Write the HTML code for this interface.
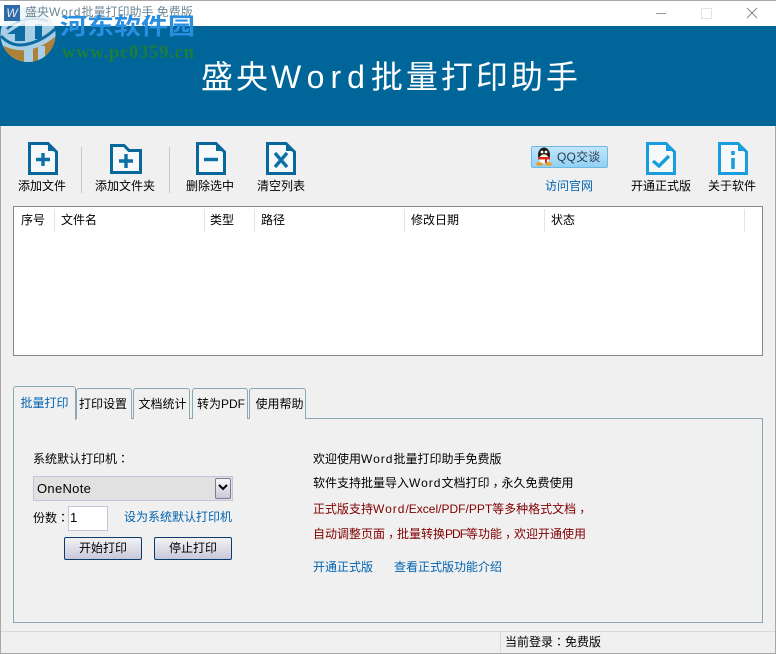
<!DOCTYPE html>
<html><head><meta charset="utf-8">
<style>
html,body{margin:0;padding:0}
body{width:776px;height:654px;position:relative;overflow:hidden;background:#f0f0f0;font-family:"Liberation Sans","Noto Sans CJK SC",sans-serif;font-size:12px;color:#000}
.a{position:absolute}
.t{position:absolute;white-space:nowrap;line-height:16px;font-size:12px}
.blue{color:#0063b1}
.red{color:#800000}
.w{letter-spacing:1px}
.n{letter-spacing:-1px}
.c{display:inline-block;width:12px;text-align:center;font-family:"Noto Sans CJK TC",sans-serif}
.k{display:inline-block;width:12px;text-align:center;font-family:"Noto Sans CJK TC",sans-serif;transform:translateY(3px)}
.sep{position:absolute;width:1px;background:#c8c8c8}
.col{position:absolute;width:1px;top:209px;height:23px;background:#e4e4e4}
.tab{position:absolute;top:388px;height:30px;border:1px solid #8ba6b5;border-bottom:none;border-radius:3px 3px 0 0;background:#f0f0f0;text-align:center;line-height:30px;box-sizing:content-box}
.btn{position:absolute;top:537px;width:76px;height:21px;border:1px solid #0a3d6b;border-radius:2px;background:linear-gradient(#f2f2f6,#c9c8da);text-align:center;line-height:21px}
</style></head><body>
<!-- frame -->
<div class="a" style="left:0;top:0;width:776px;height:26px;background:#fff"></div>
<div class="a" style="left:0;top:0;width:776px;height:1px;background:#a8a8a8"></div>
<div class="a" style="left:0;top:26px;width:776px;height:100px;background:#00669a"></div>
<div class="a" style="left:0;top:126px;width:1px;height:528px;background:#a8a8a8"></div>
<div class="a" style="left:775px;top:126px;width:1px;height:528px;background:#a8a8a8"></div>
<div class="a" style="left:0;top:653px;width:776px;height:1px;background:#a8a8a8"></div>
<!-- watermark logo -->
<svg class="a" style="left:0;top:0" width="60" height="66" viewBox="0 0 60 66">
<defs><clipPath id="cc"><circle cx="28" cy="34.500" r="27.500"/></clipPath></defs>
<g clip-path="url(#cc)">
<rect x="0" y="0" width="60" height="66" fill="#a9cfe4"/>
<path d="M4 46Q30 58 56 36V66H0Z" fill="#ad8238"/>
<rect x="24" y="49" width="9" height="16" fill="#a9cfe4"/>
<rect x="38" y="46" width="7" height="16" fill="#a9cfe4"/>
<path d="M1 36Q12 48 28 44Q44 40 56 28" fill="none" stroke="#0c6ba3" stroke-width="3"/>
<path d="M7 34L25 22V41H15V34Z" fill="#0c6ba3"/>
<rect x="35" y="24" width="7" height="15" fill="#0c6ba3"/>
<path d="M7 29Q24 14 48 21" fill="none" stroke="#0c6ba3" stroke-width="2.500"/>
</g>
<rect x="0" y="1" width="60" height="25" fill="#fff" opacity=".82"/>
<path d="M17 17l1.500 2 2-1-1 2 1.500 1.500-2.500-.5-1 2-.5-2.500-2-.5 2-1z" fill="#6fa6d8"/>
</svg>
<!-- title bar -->
<div class="a" style="left:4px;top:5px;width:16px;height:16px;background:#2f6aa8;color:#e8eef6;font-size:12px;line-height:16px;text-align:center;font-style:italic">W</div>
<div class="t" style="left:25px;top:4px;color:#6f8796">盛央<span class="w">Word</span>批量打印助手 免费版</div>
<div class="a" style="left:656px;top:13px;width:10px;height:1px;background:#999"></div>
<div class="a" style="left:701px;top:8px;width:9px;height:9px;border:1px solid #e4e4e4"></div>
<svg class="a" style="left:746px;top:7px" width="12" height="12"><path d="M1 1L11 11M11 1L1 11" stroke="#888" stroke-width="1" fill="none"/></svg>
<div class="t" style="left:60px;top:12px;font-size:27px;line-height:30px;font-weight:bold;color:#2a8fe0;font-family:'Noto Sans CJK SC',sans-serif;transform:scaleY(.85);transform-origin:0 0">河东软件园</div>
<div class="t" style="left:62px;top:45px;font-size:18.500px;font-weight:bold;color:#1d7d3a;font-family:'Liberation Serif',serif;letter-spacing:.8px">www.pc0359.cn</div>
<!-- banner title -->
<div class="t" style="left:201px;top:54px;font-size:32px;line-height:46px;color:#fff;letter-spacing:3px">盛央<span style="letter-spacing:6px">Word</span>批量打印助手</div>
<!-- toolbar icons -->
<svg class="a" style="left:27px;top:142px" width="32" height="34"><path d="M2.500 1.500H21L29.500 10V31.500H2.500Z" fill="#f6f8fa" stroke="#08689b" stroke-width="3"/><path d="M21 0L30 9H21Z" fill="#08689b"/><path d="M16 11V24M9 17.500H23" stroke="#0c6fa5" stroke-width="3.400"/></svg>
<svg class="a" style="left:109px;top:143px" width="34" height="32"><path d="M2.500 2.500H15L20 7.500H31.500V29.500H2.500Z" fill="#f6f8fa" stroke="#08689b" stroke-width="3"/><path d="M17 11V25M10 18H24" stroke="#0c6fa5" stroke-width="3.400"/></svg>
<svg class="a" style="left:195px;top:142px" width="32" height="34"><path d="M2.500 1.500H21L29.500 10V31.500H2.500Z" fill="#f6f8fa" stroke="#08689b" stroke-width="3"/><path d="M21 0L30 9H21Z" fill="#08689b"/><path d="M9 17.500H23" stroke="#0c6fa5" stroke-width="3.400"/></svg>
<svg class="a" style="left:265px;top:142px" width="32" height="34"><path d="M2.500 1.500H21L29.500 10V31.500H2.500Z" fill="#f6f8fa" stroke="#08689b" stroke-width="3"/><path d="M21 0L30 9H21Z" fill="#08689b"/><path d="M10 11L22 25M22 11L10 25" stroke="#0c6fa5" stroke-width="3.400"/></svg>
<svg class="a" style="left:645px;top:142px" width="32" height="34"><path d="M2.500 1.500H21L29.500 10V31.500H2.500Z" fill="#f6f8fa" stroke="#1a9ddc" stroke-width="3"/><path d="M21 0L30 9H21Z" fill="#1a9ddc"/><path d="M8 19L14 24L24 14" fill="none" stroke="#1a9ddc" stroke-width="3.400"/></svg>
<svg class="a" style="left:717px;top:142px" width="32" height="34"><path d="M2.500 1.500H21L29.500 10V31.500H2.500Z" fill="#f6f8fa" stroke="#1a9ddc" stroke-width="3"/><path d="M21 0L30 9H21Z" fill="#1a9ddc"/><path d="M16 9V13M16 16V27" stroke="#1a9ddc" stroke-width="3.600"/></svg>
<div class="sep" style="left:81px;top:147px;height:46px"></div>
<div class="sep" style="left:169px;top:147px;height:46px"></div>
<div class="t" style="left:18px;top:178px">添加文件</div>
<div class="t" style="left:95px;top:178px">添加文件夹</div>
<div class="t" style="left:186px;top:178px">删除选中</div>
<div class="t" style="left:257px;top:178px">清空列表</div>
<div class="t" style="left:631px;top:178px">开通正式版</div>
<div class="t" style="left:708px;top:178px">关于软件</div>
<div class="t blue" style="left:545px;top:178px">访问官网</div>
<!-- QQ -->
<div class="a" style="left:531px;top:146px;width:75px;height:20px;border:1px solid #6db9e6;border-radius:2px;background:linear-gradient(#c4e6fa,#92d0f2)"></div>
<svg class="a" style="left:535px;top:147px" width="18" height="20"><ellipse cx="9" cy="8" rx="6" ry="7.500" fill="#1c1c1c"/><ellipse cx="9" cy="12" rx="5" ry="4.500" fill="#fff"/><circle cx="7" cy="5" r="1.400" fill="#fff"/><circle cx="11" cy="5" r="1.400" fill="#fff"/><path d="M3 10H15V12.500H12V16H10V12.500H3Z" fill="#d9291c"/><path d="M7.300 7h3.400l-1.700 1.800z" fill="#efa51d"/><ellipse cx="4.500" cy="17" rx="3.500" ry="1.800" fill="#e9a020"/><ellipse cx="13.500" cy="17" rx="3.500" ry="1.800" fill="#e9a020"/></svg>
<div class="t" style="left:557px;top:149px;color:#1e3a50"><span style="letter-spacing:.2px">QQ</span>交谈</div>
<!-- list -->
<div class="a" style="left:13px;top:206px;width:748px;height:148px;border:1px solid #85888f;background:#fff"></div>
<div class="col" style="left:54px"></div><div class="col" style="left:204px"></div><div class="col" style="left:254px"></div><div class="col" style="left:404px"></div><div class="col" style="left:544px"></div><div class="col" style="left:744px"></div>
<div class="t" style="left:21px;top:212px">序号</div>
<div class="t" style="left:61px;top:212px">文件名</div>
<div class="t" style="left:210px;top:212px">类型</div>
<div class="t" style="left:261px;top:212px">路径</div>
<div class="t" style="left:411px;top:212px">修改日期</div>
<div class="t" style="left:551px;top:212px">状态</div>
<!-- tab panel -->
<div class="a" style="left:13px;top:418px;width:748px;height:203px;border:1px solid #8ba6b5;background:#f0f0f0"></div>
<div class="tab" style="left:76px;width:54px;text-indent:-2px">打印设置</div>
<div class="tab" style="left:133px;width:55px;text-indent:2px">文档统计</div>
<div class="tab" style="left:192px;width:54px;text-indent:2px">转为PDF</div>
<div class="tab" style="left:249px;width:55px;text-indent:4px">使用帮助</div>
<div class="tab blue" style="left:13px;top:386px;width:61px;height:33px;line-height:32px;background:#f0f0f0">批量打印</div>
<!-- left form -->
<div class="t" style="left:33px;top:451px">系统默认打印机<span class="c">：</span></div>
<div class="a" style="left:33px;top:476px;width:198px;height:23px;border:1px solid #c4c4dc;background:#e1e1e1"></div>
<div class="t" style="left:37px;top:481px;font-size:13px;letter-spacing:.3px">OneNote</div>
<div class="a" style="left:215px;top:478px;width:14px;height:19px;border:1px solid #7d7d92;border-radius:2px;background:linear-gradient(#f6f6fa,#c8c8d8)"></div>
<svg class="a" style="left:218px;top:484px" width="10" height="8"><path d="M1 1L5 5L9 1" fill="none" stroke="#000" stroke-width="2"/></svg>
<div class="t" style="left:33px;top:510px">份数<span class="c">：</span></div>
<div class="a" style="left:68px;top:506px;width:38px;height:23px;border:1px solid #c4c4dc;background:#fff"></div>
<div class="t" style="left:70px;top:510px;font-size:13px">1</div>
<div class="t blue" style="left:124px;top:509px">设为系统默认打印机</div>
<div class="btn" style="left:64px">开始打印</div>
<div class="btn" style="left:154px">停止打印</div>
<!-- right text -->
<div class="t" style="left:313px;top:451px">欢迎使用<span class="w">Word</span>批量打印助手免费版</div>
<div class="t" style="left:313px;top:475px">软件支持批量导入<span class="w">Word</span>文档打印<span class="k">，</span>永久免费使用</div>
<div class="t red" style="left:313px;top:501px">正式版支持<span class="w">Word</span>/Excel/PDF/PPT等多种格式文档<span class="k">，</span></div>
<div class="t red" style="left:313px;top:526px">自动调整页面<span class="k">，</span>批量转换<span class="n">PDF</span>等功能<span class="k">，</span>欢迎开通使用</div>
<div class="t blue" style="left:313px;top:559px">开通正式版</div>
<div class="t blue" style="left:394px;top:559px">查看正式版功能介绍</div>
<!-- status bar -->
<div class="a" style="left:1px;top:631px;width:774px;height:1px;background:#d8d8d8"></div>
<div class="a" style="left:500px;top:632px;width:1px;height:21px;background:#d8d8d8"></div>
<div class="t" style="left:505px;top:634px">当前登录<span class="c">：</span>免费版</div>
</body></html>
